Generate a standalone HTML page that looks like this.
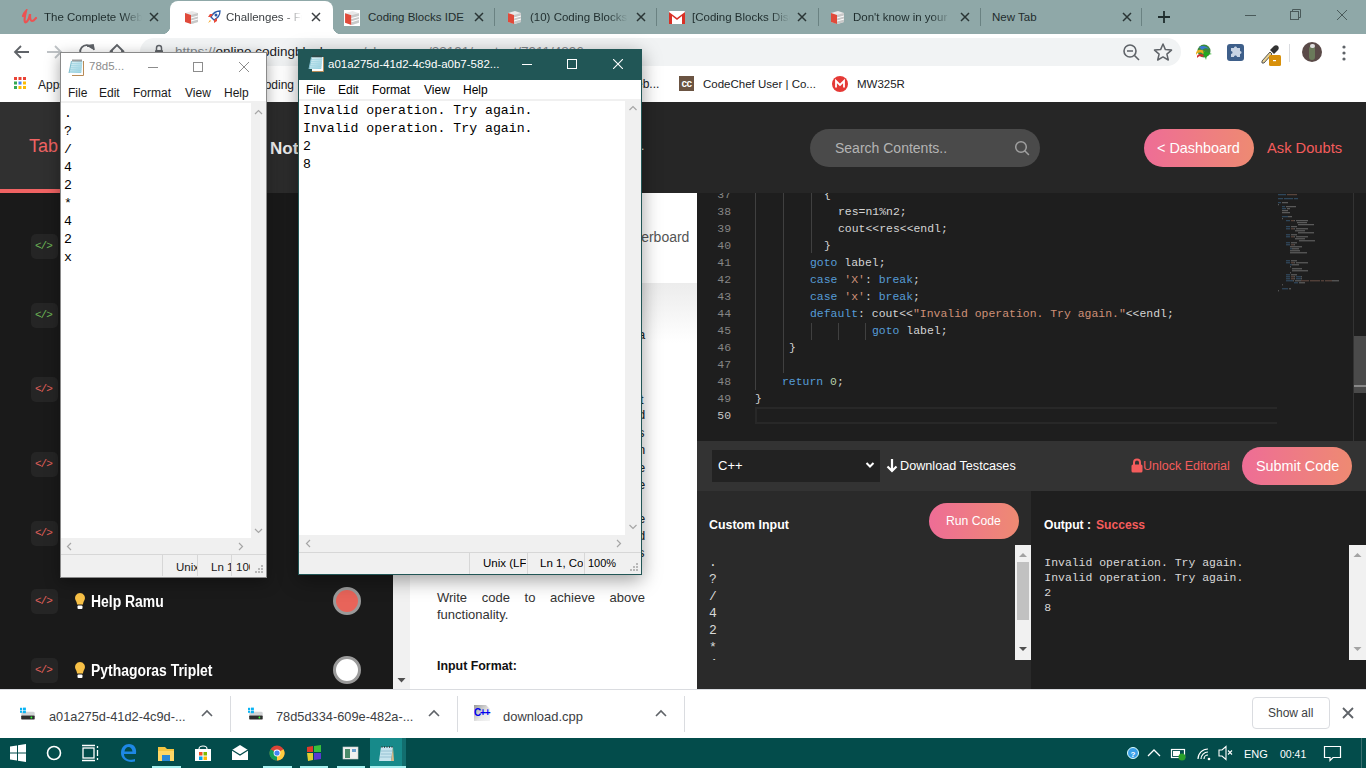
<!DOCTYPE html>
<html><head><meta charset="utf-8">
<style>
*{margin:0;padding:0;box-sizing:border-box}
html,body{width:1366px;height:768px;overflow:hidden;background:#fff;font-family:"Liberation Sans",sans-serif}
.a{position:absolute}
.t{position:absolute;white-space:nowrap;line-height:1}
.mono{font-family:"Liberation Mono",monospace}
</style></head><body>
<!-- ============ CHROME TAB STRIP ============ -->
<div class="a" style="left:0;top:0;width:1366px;height:34px;background:#8fa8a8"></div>
<div class="a" style="left:162px;top:0;width:179px;height:34px;overflow:hidden">
  <div class="a" style="left:8px;top:1px;width:163px;height:40px;background:#fff;border-radius:8px"></div>
  <div class="a" style="left:0;top:26px;width:8px;height:8px;background:radial-gradient(circle at 0 0,#8fa8a8 8px,#fff 8.5px)"></div>
  <div class="a" style="left:171px;top:26px;width:8px;height:8px;background:radial-gradient(circle at 100% 0,#8fa8a8 8px,#fff 8.5px)"></div>
</div>
<!-- tab favicons -->
<svg class="a" style="left:20px;top:9px" width="18" height="16" viewBox="0 0 18 16"><path d="M3 7 C4 4 6 2 6 2 C5 6 4 11 5 13 C6 14 8 12 9 9 C10 6 10 5 10 5 C10 8 10 12 12 12 C14 12 15 10 16 9" fill="none" stroke="#ec5252" stroke-width="2.2" stroke-linecap="round"/></svg>
<svg class="a" style="left:184px;top:10px" width="15" height="15" viewBox="0 0 15 15"><path d="M1 3 L8 1 L14 3 L14 12 L8 14 L1 12Z" fill="#e8e8e8"/><path d="M1 3 L7 5 L7 14 L1 12Z" fill="#e04a3a"/><path d="M7 5 L14 3 L14 12 L7 14Z" fill="#c8c8c8"/><path d="M7 8 L14 6 M7 11 L14 9" stroke="#fff" stroke-width="1"/></svg>
<svg class="a" style="left:206px;top:9px" width="16" height="16" viewBox="0 0 16 16"><path d="M14 2 C10 2 7 4 5 8 L8 11 C12 9 14 6 14 2Z" fill="#fff" stroke="#2a5aa8" stroke-width="1.3"/><circle cx="10" cy="6" r="1.5" fill="#2a5aa8"/><path d="M5 8 L2 8 L4 5 L7 5Z M8 11 L8 14 L11 12 L11 9Z" fill="#e84a3a"/><path d="M4 11 L2 14 L5 12Z" fill="#f5a623"/></svg>
<svg class="a" style="left:344px;top:10px" width="16" height="16" viewBox="0 0 15 15"><rect x="0" y="0" width="15" height="15" fill="#fff"/><path d="M1 3 L8 1 L14 3 L14 12 L8 14 L1 12Z" fill="#e8e8e8"/><path d="M1 3 L7 5 L7 14 L1 12Z" fill="#e04a3a"/><path d="M7 5 L14 3 L14 12 L7 14Z" fill="#c8c8c8"/><path d="M7 8 L14 6 M7 11 L14 9" stroke="#fff" stroke-width="1"/></svg>
<svg class="a" style="left:507px;top:10px" width="15" height="15" viewBox="0 0 15 15"><path d="M1 3 L8 1 L14 3 L14 12 L8 14 L1 12Z" fill="#e8e8e8"/><path d="M1 3 L7 5 L7 14 L1 12Z" fill="#e04a3a"/><path d="M7 5 L14 3 L14 12 L7 14Z" fill="#c8c8c8"/><path d="M7 8 L14 6 M7 11 L14 9" stroke="#fff" stroke-width="1"/></svg>
<svg class="a" style="left:669px;top:11px" width="16" height="13" viewBox="0 0 16 13"><rect x="0" y="0" width="16" height="13" rx="1" fill="#fff"/><path d="M0 1 L8 7 L16 1 L16 13 L13 13 L13 5 L8 9 L3 5 L3 13 L0 13Z" fill="#d93025"/></svg>
<svg class="a" style="left:830px;top:10px" width="15" height="15" viewBox="0 0 15 15"><path d="M1 3 L8 1 L14 3 L14 12 L8 14 L1 12Z" fill="#e8e8e8"/><path d="M1 3 L7 5 L7 14 L1 12Z" fill="#e04a3a"/><path d="M7 5 L14 3 L14 12 L7 14Z" fill="#c8c8c8"/><path d="M7 8 L14 6 M7 11 L14 9" stroke="#fff" stroke-width="1"/></svg>
<!-- tab titles (with fade) -->
<div class="t" style="left:44px;top:11.5px;width:98px;overflow:hidden;font-size:11.5px;color:#1f2d2d;-webkit-mask-image:linear-gradient(90deg,#000 80%,transparent)">The Complete Web Developer</div>
<div class="t" style="left:226px;top:11.5px;width:76px;overflow:hidden;font-size:11.5px;color:#3c4043;-webkit-mask-image:linear-gradient(90deg,#000 75%,transparent)">Challenges - Fundamentals</div>
<div class="t" style="left:368px;top:11.5px;font-size:11.5px;color:#1f2d2d">Coding Blocks IDE</div>
<div class="t" style="left:530px;top:11.5px;width:98px;overflow:hidden;font-size:11.5px;color:#1f2d2d;-webkit-mask-image:linear-gradient(90deg,#000 80%,transparent)">(10) Coding Blocks Discord</div>
<div class="t" style="left:692px;top:11.5px;width:98px;overflow:hidden;font-size:11.5px;color:#1f2d2d;-webkit-mask-image:linear-gradient(90deg,#000 80%,transparent)">[Coding Blocks Discord]</div>
<div class="t" style="left:853px;top:11.5px;width:98px;overflow:hidden;font-size:11.5px;color:#1f2d2d;-webkit-mask-image:linear-gradient(90deg,#000 80%,transparent)">Don't know in your language</div>
<div class="t" style="left:992px;top:11.5px;font-size:11.5px;color:#1f2d2d">New Tab</div>
<!-- tab close X -->
<svg class="a" style="left:0;top:0" width="1366" height="34">
 <g stroke="#2a3535" stroke-width="1.5" fill="none">
  <path d="M150 13 L158 21 M158 13 L150 21"/>
  <path d="M312 13 L320 21 M320 13 L312 21" stroke="#3c4043"/>
  <path d="M475 13 L483 21 M483 13 L475 21"/>
  <path d="M637 13 L645 21 M645 13 L637 21"/>
  <path d="M798 13 L806 21 M806 13 L798 21"/>
  <path d="M961 13 L969 21 M969 13 L961 21"/>
  <path d="M1123 13 L1131 21 M1131 13 L1123 21"/>
 </g>
 <g stroke="#6a8282" stroke-width="1">
  <path d="M494.5 8 V26 M656.5 8 V26 M818.5 8 V26 M980.5 8 V26 M1141.5 8 V26"/>
 </g>
 <path d="M1164 11 V23 M1158 17 H1170" stroke="#1f2d2d" stroke-width="1.8"/>
 <path d="M1245 15.5 H1256" stroke="#4a5a5a" stroke-width="1"/>
 <g fill="none" stroke="#4a5a5a" stroke-width="1"><rect x="1290.5" y="11.5" width="8" height="8"/><path d="M1292.5 11.5 V9.5 H1300.5 V17.5 H1298.5"/></g>
 <path d="M1337 10 L1347 20 M1347 10 L1337 20" stroke="#4a5a5a" stroke-width="1"/>
</svg>
<!-- ============ TOOLBAR ============ -->
<div class="a" style="left:0;top:34px;width:1366px;height:68px;background:#fff"></div>
<div class="a" style="left:140px;top:38px;width:1041px;height:28px;background:#f1f3f4;border-radius:14px"></div>
<svg class="a" style="left:0;top:34px" width="140" height="34">
 <g fill="none" stroke-width="1.8">
  <path d="M29 18 H15 M21 12 L15 18 L21 24" stroke="#5f6368"/>
  <path d="M47 18 H61 M55 12 L61 18 L55 24" stroke="#bfc3c6"/>
  <path d="M92 14 A6.5 6.5 0 1 0 93 19" stroke="#5f6368"/>
  <path d="M87 12 L93 11 L94 16" stroke="#5f6368" fill="#5f6368"/>
  <path d="M110 18 L117 11 L124 18 M112 16 V25 H122 V16" stroke="#5f6368"/>
 </g>
</svg>
<svg class="a" style="left:154px;top:44px" width="10" height="13" viewBox="0 0 10 13"><path d="M2.5 6 V4 A2.5 2.5 0 0 1 7.5 4 V6" fill="none" stroke="#5f6368" stroke-width="1.5"/><rect x="1" y="6" width="8" height="6" rx="1" fill="#5f6368"/></svg>
<div class="t" style="left:175px;top:45px;font-size:13.5px;color:#80868b">https://<span style="color:#202124">online.codingblocks.com</span>/classroom/33191/content/7911/4896</div>
<svg class="a" style="left:1120px;top:40px" width="240" height="26">
 <g fill="none" stroke="#5f6368" stroke-width="1.6"><circle cx="10" cy="11" r="6"/><path d="M14.5 15.5 L19 20 M7 11 H13"/></g>
 <path d="M43 4 L45.4 9.6 L51.5 10.1 L46.9 14.1 L48.3 20 L43 16.9 L37.7 20 L39.1 14.1 L34.5 10.1 L40.6 9.6Z" fill="none" stroke="#5f6368" stroke-width="1.5" stroke-linejoin="round"/>
</svg>
<!-- extension icons -->
<svg class="a" style="left:1194px;top:43px" width="20" height="18" viewBox="0 0 20 18"><circle cx="10" cy="8" r="6.5" fill="#3a8a3a"/><path d="M5 4 C8 2 13 3 15 6 C13 5 10 5 8 7Z" fill="#3a7ad0"/><path d="M2 10 C3 6 8 6 11 9 L9 11 C7 9 4 9 2 12Z" fill="#e8b020"/><path d="M3 13 C5 10 9 11 10 13 L8 14 C6 13 5 13 3 15Z" fill="#d03030"/><path d="M9 8 L18 11 L13 12 L12 17Z" fill="#22aa22"/></svg>
<svg class="a" style="left:1227px;top:44px" width="17" height="17" viewBox="0 0 17 17"><rect x="0" y="0" width="17" height="17" rx="3" fill="#3e5f8a"/><path d="M4 4 H7 C7 2 10 2 10 4 H13 V7 C15 7 15 10 13 10 V13 H10 C10 11 7 11 7 13 H4 V10 C6 10 6 7 4 7Z" fill="#c8d4e4"/></svg>
<svg class="a" style="left:1259px;top:43px" width="24" height="24" viewBox="0 0 24 24"><path d="M3 18 L11 9 L13 11 L5 20 L3 20Z" fill="#e8d090" stroke="#555" stroke-width="1"/><path d="M11 7 L15 3 C16 2 18 2 19 3 C20 4 20 6 19 7 L15 11 Z" fill="#333"/><rect x="10" y="12" width="12" height="11" rx="1.5" fill="#d8900a"/><rect x="14" y="17" width="3" height="1.2" fill="#fff"/></svg>
<div class="a" style="left:1289px;top:44px;width:1px;height:18px;background:#dadce0"></div>
<div class="a" style="left:1302px;top:42px;width:20px;height:20px;border-radius:50%;background:#5a4a48;overflow:hidden"><div class="a" style="left:7px;top:4px;width:6px;height:14px;background:#6a7a5a;border-radius:3px"></div><div class="a" style="left:8px;top:2px;width:5px;height:4px;background:#ddd;border-radius:2px"></div></div>
<svg class="a" style="left:1340px;top:44px" width="8" height="18"><circle cx="4" cy="3" r="1.6" fill="#5f6368"/><circle cx="4" cy="9" r="1.6" fill="#5f6368"/><circle cx="4" cy="15" r="1.6" fill="#5f6368"/></svg>
<!-- ============ BOOKMARKS ============ -->
<svg class="a" style="left:14px;top:77px" width="12" height="12" viewBox="0 0 12 12">
 <rect x="0" y="0" width="3" height="3" fill="#ea4335"/><rect x="4.5" y="0" width="3" height="3" fill="#ea4335"/><rect x="9" y="0" width="3" height="3" fill="#ea4335"/>
 <rect x="0" y="4.5" width="3" height="3" fill="#34a853"/><rect x="4.5" y="4.5" width="3" height="3" fill="#4285f4"/><rect x="9" y="4.5" width="3" height="3" fill="#fbbc05"/>
 <rect x="0" y="9" width="3" height="3" fill="#34a853"/><rect x="4.5" y="9" width="3" height="3" fill="#fbbc05"/><rect x="9" y="9" width="3" height="3" fill="#fbbc05"/>
</svg>
<div class="t" style="left:38px;top:79px;font-size:12px;color:#202124">Apps</div>
<div class="t" style="left:256px;top:79px;font-size:12px;color:#202124">Coding</div>
<div class="t" style="left:636px;top:78px;font-size:12px;color:#202124">eb...</div>
<div class="a" style="left:679px;top:76px;width:15px;height:15px;background:#6b5442;color:#fff;font-size:10px;font-weight:bold;line-height:15px;text-align:center;letter-spacing:-0.5px">cc</div>
<div class="t" style="left:703px;top:79px;font-size:11.5px;color:#202124">CodeChef User | Co...</div>
<svg class="a" style="left:832px;top:76px" width="16" height="16" viewBox="0 0 16 16"><circle cx="8" cy="8" r="8" fill="#e53935"/><path d="M4 11.5 V5 L8 9 L12 5 V11.5" fill="none" stroke="#fff" stroke-width="1.8"/></svg>
<div class="t" style="left:857px;top:79px;font-size:11.5px;color:#202124">MW325R</div>
<!-- ============ WEBSITE ============ -->
<div class="a" style="left:0;top:102px;width:1366px;height:587px;background:#1a1a1a"></div>
<!-- header -->
<div class="a" style="left:0;top:102px;width:1366px;height:91px;background:#262626"></div>
<div class="a" style="left:0;top:102px;width:62px;height:91px;background:#303030"></div>
<div class="a" style="left:262px;top:102px;width:40px;height:91px;background:#2c2c2c"></div>
<div class="a" style="left:0;top:189px;width:62px;height:4px;background:#f06363"></div>
<div class="t" style="left:29px;top:137px;font-size:18px;color:#f06363">Tab</div>
<div class="t" style="left:270px;top:139.5px;font-size:17px;font-weight:bold;color:#eee">Notes</div>
<div class="t" style="left:641px;top:140px;font-size:12px;color:#ddd">.</div>
<div class="a" style="left:810px;top:129px;width:230px;height:38px;border-radius:19px;background:#4a4a4a"></div>
<div class="t" style="left:835px;top:141px;font-size:14px;color:#b4b4b4">Search Contents..</div>
<svg class="a" style="left:1014px;top:140px" width="17" height="17" viewBox="0 0 17 17"><circle cx="7" cy="7" r="5.3" fill="none" stroke="#a0a0a0" stroke-width="1.5"/><path d="M11 11 L14.5 14.5" stroke="#a0a0a0" stroke-width="1.5" stroke-linecap="round"/></svg>
<div class="a" style="left:1144px;top:129px;width:110px;height:38px;border-radius:19px;background:linear-gradient(90deg,#ee6d96,#ee8a72)"></div>
<div class="t" style="left:1157px;top:141px;font-size:14.4px;color:#fff">&lt; Dashboard</div>
<div class="t" style="left:1267px;top:141px;font-size:14.7px;color:#f45c5c">Ask Doubts</div>
<!-- sidebar list -->
<div class="a" style="left:393px;top:193px;width:17px;height:496px;background:#f1f1f1"></div>
<svg class="a" style="left:393px;top:676px" width="17" height="10"><path d="M4.5 2 H12.5 L8.5 6.5Z" fill="#505050"/></svg>
<div class="a" style="left:31px;top:234px;width:27px;height:25px;border-radius:5px;background:#252525"></div>
<div class="t mono" style="left:35px;top:240.5px;font-size:11px;color:#6cb455;letter-spacing:-1px">&lt;/&gt;</div>
<div class="a" style="left:31px;top:303px;width:27px;height:25px;border-radius:5px;background:#252525"></div>
<div class="t mono" style="left:35px;top:309.5px;font-size:11px;color:#6cb455;letter-spacing:-1px">&lt;/&gt;</div>
<div class="a" style="left:31px;top:377px;width:27px;height:25px;border-radius:5px;background:#252525"></div>
<div class="t mono" style="left:35px;top:383.5px;font-size:11px;color:#e0605a;letter-spacing:-1px">&lt;/&gt;</div>
<div class="a" style="left:31px;top:452px;width:27px;height:25px;border-radius:5px;background:#252525"></div>
<div class="t mono" style="left:35px;top:458.5px;font-size:11px;color:#e0605a;letter-spacing:-1px">&lt;/&gt;</div>
<div class="a" style="left:31px;top:521px;width:27px;height:25px;border-radius:5px;background:#252525"></div>
<div class="t mono" style="left:35px;top:527.5px;font-size:11px;color:#e0605a;letter-spacing:-1px">&lt;/&gt;</div>
<div class="a" style="left:31px;top:589px;width:27px;height:25px;border-radius:5px;background:#252525"></div>
<div class="t mono" style="left:35px;top:595.5px;font-size:11px;color:#e0605a;letter-spacing:-1px">&lt;/&gt;</div>
<div class="a" style="left:31px;top:658px;width:27px;height:25px;border-radius:5px;background:#252525"></div>
<div class="t mono" style="left:35px;top:664.5px;font-size:11px;color:#e0605a;letter-spacing:-1px">&lt;/&gt;</div>
<svg class="a" style="left:74px;top:592px" width="12" height="18" viewBox="0 0 12 18"><path d="M6 1 A5 5 0 0 1 10.5 8 C9.5 10 9 11 9 12.5 H3 C3 11 2.5 10 1.5 8 A5 5 0 0 1 6 1Z" fill="#f7c046"/><rect x="3.5" y="13.5" width="5" height="3.5" rx="1" fill="#fff"/></svg>
<div class="t" style="left:91px;top:594px;font-size:16px;font-weight:bold;color:#fff;transform:scaleX(0.87);transform-origin:0 0">Help Ramu</div>
<div class="a" style="left:333px;top:587px;width:28px;height:28px;border-radius:50%;background:#e8645a;border:3px solid #9a9a9a"></div>
<svg class="a" style="left:74px;top:661px" width="12" height="18" viewBox="0 0 12 18"><path d="M6 1 A5 5 0 0 1 10.5 8 C9.5 10 9 11 9 12.5 H3 C3 11 2.5 10 1.5 8 A5 5 0 0 1 6 1Z" fill="#f7c046"/><rect x="3.5" y="13.5" width="5" height="3.5" rx="1" fill="#fff"/></svg>
<div class="t" style="left:91px;top:663px;font-size:16px;font-weight:bold;color:#fff;transform:scaleX(0.87);transform-origin:0 0">Pythagoras Triplet</div>
<div class="a" style="left:333px;top:656px;width:28px;height:28px;border-radius:50%;background:#fff;border:3px solid #9a9a9a"></div>
<!-- problem panel -->
<div class="a" style="left:410px;top:193px;width:287px;height:496px;background:#fff"></div>
<div class="a" style="left:410px;top:283px;width:287px;height:60px;background:linear-gradient(#ececec,#fff)"></div>
<div class="t" style="left:610px;top:230px;font-size:14px;color:#555">Leaderboard</div>
<div class="t" style="left:638px;top:328px;font-size:13px;color:#222">a</div>
<div class="t" style="left:640px;top:393px;font-size:13px;color:#222">t</div>
<div class="t" style="left:638px;top:408px;font-size:13px;color:#222">d</div>
<div class="t" style="left:638px;top:426px;font-size:13px;color:#222">s</div>
<div class="t" style="left:638px;top:443px;font-size:13px;color:#222">n</div>
<div class="t" style="left:638px;top:461px;font-size:13px;color:#222">e</div>
<div class="t" style="left:638px;top:478px;font-size:13px;color:#222">e</div>
<div class="t" style="left:638px;top:511.5px;font-size:13px;color:#222">e</div>
<div class="t" style="left:638px;top:528.5px;font-size:13px;color:#222">d</div>
<div class="t" style="left:638px;top:545.5px;font-size:13px;color:#222">s</div>
<div class="a" style="left:437px;top:589px;width:208px;font-size:13px;line-height:17px;color:#333;text-align:justify;text-align-last:left">Write code to achieve above functionality.</div>
<div class="t" style="left:437px;top:660px;font-size:12.4px;font-weight:bold;color:#111">Input Format:</div>
<!-- code editor -->
<div class="a" style="left:697px;top:193px;width:669px;height:248px;background:#1e1e1e;overflow:hidden">
 <div class="t mono" style="left:14px;top:-6.8px;width:20px;text-align:right;height:17px;line-height:17px;font-size:11.45px;color:#858585">37</div>
<div class="t mono" style="left:127px;top:-6.8px;height:17px;line-height:17px;font-size:11.45px;white-space:pre"><span style="color:#d4d4d4">{</span></div>
<div class="t mono" style="left:14px;top:10.2px;width:20px;text-align:right;height:17px;line-height:17px;font-size:11.45px;color:#858585">38</div>
<div class="t mono" style="left:141px;top:10.2px;height:17px;line-height:17px;font-size:11.45px;white-space:pre"><span style="color:#d4d4d4">res=n1%n2;</span></div>
<div class="t mono" style="left:14px;top:27.2px;width:20px;text-align:right;height:17px;line-height:17px;font-size:11.45px;color:#858585">39</div>
<div class="t mono" style="left:141px;top:27.2px;height:17px;line-height:17px;font-size:11.45px;white-space:pre"><span style="color:#d4d4d4">cout&lt;&lt;res&lt;&lt;endl;</span></div>
<div class="t mono" style="left:14px;top:44.2px;width:20px;text-align:right;height:17px;line-height:17px;font-size:11.45px;color:#858585">40</div>
<div class="t mono" style="left:127px;top:44.2px;height:17px;line-height:17px;font-size:11.45px;white-space:pre"><span style="color:#d4d4d4">}</span></div>
<div class="t mono" style="left:14px;top:61.2px;width:20px;text-align:right;height:17px;line-height:17px;font-size:11.45px;color:#858585">41</div>
<div class="t mono" style="left:113px;top:61.2px;height:17px;line-height:17px;font-size:11.45px;white-space:pre"><span style="color:#569cd6">goto</span><span style="color:#d4d4d4"> label;</span></div>
<div class="t mono" style="left:14px;top:78.2px;width:20px;text-align:right;height:17px;line-height:17px;font-size:11.45px;color:#858585">42</div>
<div class="t mono" style="left:113px;top:78.2px;height:17px;line-height:17px;font-size:11.45px;white-space:pre"><span style="color:#569cd6">case</span><span style="color:#d4d4d4"> </span><span style="color:#ce9178">&#x27;X&#x27;</span><span style="color:#d4d4d4">: </span><span style="color:#569cd6">break</span><span style="color:#d4d4d4">;</span></div>
<div class="t mono" style="left:14px;top:95.2px;width:20px;text-align:right;height:17px;line-height:17px;font-size:11.45px;color:#858585">43</div>
<div class="t mono" style="left:113px;top:95.2px;height:17px;line-height:17px;font-size:11.45px;white-space:pre"><span style="color:#569cd6">case</span><span style="color:#d4d4d4"> </span><span style="color:#ce9178">&#x27;x&#x27;</span><span style="color:#d4d4d4">: </span><span style="color:#569cd6">break</span><span style="color:#d4d4d4">;</span></div>
<div class="t mono" style="left:14px;top:112.2px;width:20px;text-align:right;height:17px;line-height:17px;font-size:11.45px;color:#858585">44</div>
<div class="t mono" style="left:113px;top:112.2px;height:17px;line-height:17px;font-size:11.45px;white-space:pre"><span style="color:#569cd6">default</span><span style="color:#d4d4d4">: cout&lt;&lt;</span><span style="color:#ce9178">&quot;Invalid operation. Try again.&quot;</span><span style="color:#d4d4d4">&lt;&lt;endl;</span></div>
<div class="t mono" style="left:14px;top:129.2px;width:20px;text-align:right;height:17px;line-height:17px;font-size:11.45px;color:#858585">45</div>
<div class="t mono" style="left:175px;top:129.2px;height:17px;line-height:17px;font-size:11.45px;white-space:pre"><span style="color:#569cd6">goto</span><span style="color:#d4d4d4"> label;</span></div>
<div class="t mono" style="left:14px;top:146.2px;width:20px;text-align:right;height:17px;line-height:17px;font-size:11.45px;color:#858585">46</div>
<div class="t mono" style="left:92px;top:146.2px;height:17px;line-height:17px;font-size:11.45px;white-space:pre"><span style="color:#d4d4d4">}</span></div>
<div class="t mono" style="left:14px;top:163.2px;width:20px;text-align:right;height:17px;line-height:17px;font-size:11.45px;color:#858585">47</div>
<div class="t mono" style="left:14px;top:180.2px;width:20px;text-align:right;height:17px;line-height:17px;font-size:11.45px;color:#858585">48</div>
<div class="t mono" style="left:85px;top:180.2px;height:17px;line-height:17px;font-size:11.45px;white-space:pre"><span style="color:#569cd6">return</span><span style="color:#d4d4d4"> </span><span style="color:#b5cea8">0</span><span style="color:#d4d4d4">;</span></div>
<div class="t mono" style="left:14px;top:197.2px;width:20px;text-align:right;height:17px;line-height:17px;font-size:11.45px;color:#858585">49</div>
<div class="t mono" style="left:58px;top:197.2px;height:17px;line-height:17px;font-size:11.45px;white-space:pre"><span style="color:#d4d4d4">}</span></div>
<div class="t mono" style="left:14px;top:214.2px;width:20px;text-align:right;height:17px;line-height:17px;font-size:11.45px;color:#c6c6c6">50</div>
<div class="a" style="left:58.0px;top:0px;width:1px;height:197px;background:#404040"></div>
<div class="a" style="left:85.5px;top:0px;width:1px;height:180px;background:#404040"></div>
<div class="a" style="left:113.5px;top:0px;width:1px;height:60px;background:#404040"></div>
<div class="a" style="left:113.5px;top:130px;width:1px;height:17px;background:#404040"></div>
<div class="a" style="left:141.0px;top:130px;width:1px;height:17px;background:#404040"></div>
<div class="a" style="left:168.0px;top:130px;width:1px;height:17px;background:#404040"></div>
<div class="a" style="left:58px;top:214px;width:522px;height:17px;border:2px solid #282828;border-right:0"></div>
<svg class="a" style="left:581px;top:0" width="75" height="110"><rect x="0.0" y="1.2" width="8.0" height="1" fill="#569cd6" opacity="0.42"/><rect x="9.0" y="1.2" width="10.0" height="1" fill="#ce9178" opacity="0.42"/><rect x="0.0" y="5.2" width="5.0" height="1" fill="#569cd6" opacity="0.42"/><rect x="6.0" y="5.2" width="9.0" height="1" fill="#569cd6" opacity="0.42"/><rect x="16.0" y="5.2" width="4.0" height="1" fill="#569cd6" opacity="0.42"/><rect x="0.0" y="9.2" width="3.0" height="1" fill="#569cd6" opacity="0.42"/><rect x="4.0" y="9.2" width="6.0" height="1" fill="#d4d4d4" opacity="0.42"/><rect x="0.0" y="11.2" width="1.0" height="1" fill="#d4d4d4" opacity="0.42"/><rect x="4.0" y="13.2" width="3.0" height="1" fill="#569cd6" opacity="0.42"/><rect x="8.0" y="13.2" width="10.0" height="1" fill="#d4d4d4" opacity="0.42"/><rect x="4.0" y="15.2" width="4.0" height="1" fill="#569cd6" opacity="0.42"/><rect x="9.0" y="15.2" width="3.0" height="1" fill="#d4d4d4" opacity="0.42"/><rect x="4.0" y="17.2" width="6.0" height="1" fill="#d4d4d4" opacity="0.42"/><rect x="4.0" y="19.2" width="8.0" height="1" fill="#d4d4d4" opacity="0.42"/><rect x="4.0" y="23.2" width="6.0" height="1" fill="#569cd6" opacity="0.42"/><rect x="10.0" y="23.2" width="4.0" height="1" fill="#d4d4d4" opacity="0.42"/><rect x="4.0" y="25.2" width="1.0" height="1" fill="#d4d4d4" opacity="0.42"/><rect x="8.0" y="27.2" width="4.0" height="1" fill="#569cd6" opacity="0.42"/><rect x="13.0" y="27.2" width="3.0" height="1" fill="#ce9178" opacity="0.42"/><rect x="16.0" y="27.2" width="1.0" height="1" fill="#d4d4d4" opacity="0.42"/><rect x="18.0" y="27.2" width="12.0" height="1" fill="#d4d4d4" opacity="0.42"/><rect x="19.0" y="29.2" width="10.0" height="1" fill="#d4d4d4" opacity="0.42"/><rect x="20.0" y="31.2" width="16.0" height="1" fill="#d4d4d4" opacity="0.42"/><rect x="8.0" y="33.2" width="4.0" height="1" fill="#569cd6" opacity="0.42"/><rect x="13.0" y="33.2" width="6.0" height="1" fill="#d4d4d4" opacity="0.42"/><rect x="8.0" y="35.3" width="4.0" height="1" fill="#569cd6" opacity="0.42"/><rect x="13.0" y="35.3" width="3.0" height="1" fill="#ce9178" opacity="0.42"/><rect x="16.0" y="35.3" width="1.0" height="1" fill="#d4d4d4" opacity="0.42"/><rect x="18.0" y="35.3" width="12.0" height="1" fill="#d4d4d4" opacity="0.42"/><rect x="17.0" y="37.3" width="10.0" height="1" fill="#d4d4d4" opacity="0.42"/><rect x="20.0" y="39.3" width="16.0" height="1" fill="#d4d4d4" opacity="0.42"/><rect x="8.0" y="41.3" width="4.0" height="1" fill="#569cd6" opacity="0.42"/><rect x="13.0" y="41.3" width="6.0" height="1" fill="#d4d4d4" opacity="0.42"/><rect x="8.0" y="43.3" width="4.0" height="1" fill="#569cd6" opacity="0.42"/><rect x="13.0" y="43.3" width="3.0" height="1" fill="#ce9178" opacity="0.42"/><rect x="16.0" y="43.3" width="1.0" height="1" fill="#d4d4d4" opacity="0.42"/><rect x="18.0" y="43.3" width="12.0" height="1" fill="#d4d4d4" opacity="0.42"/><rect x="17.0" y="45.3" width="10.0" height="1" fill="#d4d4d4" opacity="0.42"/><rect x="21.0" y="47.3" width="16.0" height="1" fill="#d4d4d4" opacity="0.42"/><rect x="8.0" y="49.3" width="4.0" height="1" fill="#569cd6" opacity="0.42"/><rect x="13.0" y="49.3" width="6.0" height="1" fill="#d4d4d4" opacity="0.42"/><rect x="8.0" y="51.3" width="4.0" height="1" fill="#569cd6" opacity="0.42"/><rect x="13.0" y="51.3" width="3.0" height="1" fill="#ce9178" opacity="0.42"/><rect x="16.0" y="51.3" width="1.0" height="1" fill="#d4d4d4" opacity="0.42"/><rect x="12.0" y="53.3" width="12.0" height="1" fill="#d4d4d4" opacity="0.42"/><rect x="12.0" y="55.3" width="2.0" height="1" fill="#569cd6" opacity="0.42"/><rect x="14.0" y="55.3" width="7.0" height="1" fill="#d4d4d4" opacity="0.42"/><rect x="12.0" y="57.3" width="10.0" height="1" fill="#d4d4d4" opacity="0.42"/><rect x="12.0" y="59.3" width="17.0" height="1" fill="#d4d4d4" opacity="0.42"/><rect x="8.0" y="67.3" width="4.0" height="1" fill="#569cd6" opacity="0.42"/><rect x="13.0" y="67.3" width="6.0" height="1" fill="#d4d4d4" opacity="0.42"/><rect x="8.0" y="69.3" width="4.0" height="1" fill="#569cd6" opacity="0.42"/><rect x="13.0" y="69.3" width="3.0" height="1" fill="#ce9178" opacity="0.42"/><rect x="16.0" y="69.3" width="1.0" height="1" fill="#d4d4d4" opacity="0.42"/><rect x="18.0" y="69.3" width="12.0" height="1" fill="#d4d4d4" opacity="0.42"/><rect x="12.0" y="71.3" width="2.0" height="1" fill="#569cd6" opacity="0.42"/><rect x="14.0" y="71.3" width="7.0" height="1" fill="#d4d4d4" opacity="0.42"/><rect x="12.0" y="73.3" width="1.0" height="1" fill="#d4d4d4" opacity="0.42"/><rect x="14.0" y="75.3" width="10.0" height="1" fill="#d4d4d4" opacity="0.42"/><rect x="14.0" y="77.3" width="16.0" height="1" fill="#d4d4d4" opacity="0.42"/><rect x="12.0" y="79.3" width="1.0" height="1" fill="#d4d4d4" opacity="0.42"/><rect x="8.0" y="81.3" width="4.0" height="1" fill="#569cd6" opacity="0.42"/><rect x="13.0" y="81.3" width="6.0" height="1" fill="#d4d4d4" opacity="0.42"/><rect x="8.0" y="83.3" width="4.0" height="1" fill="#569cd6" opacity="0.42"/><rect x="13.0" y="83.3" width="3.0" height="1" fill="#ce9178" opacity="0.42"/><rect x="16.0" y="83.3" width="1.0" height="1" fill="#d4d4d4" opacity="0.42"/><rect x="18.0" y="83.3" width="5.0" height="1" fill="#569cd6" opacity="0.42"/><rect x="23.0" y="83.3" width="1.0" height="1" fill="#d4d4d4" opacity="0.42"/><rect x="8.0" y="85.3" width="4.0" height="1" fill="#569cd6" opacity="0.42"/><rect x="13.0" y="85.3" width="3.0" height="1" fill="#ce9178" opacity="0.42"/><rect x="16.0" y="85.3" width="1.0" height="1" fill="#d4d4d4" opacity="0.42"/><rect x="18.0" y="85.3" width="5.0" height="1" fill="#569cd6" opacity="0.42"/><rect x="23.0" y="85.3" width="1.0" height="1" fill="#d4d4d4" opacity="0.42"/><rect x="8.0" y="87.3" width="7.0" height="1" fill="#569cd6" opacity="0.42"/><rect x="15.0" y="87.3" width="1.0" height="1" fill="#d4d4d4" opacity="0.42"/><rect x="17.0" y="87.3" width="6.0" height="1" fill="#d4d4d4" opacity="0.42"/><rect x="23.0" y="87.3" width="8.0" height="1" fill="#ce9178" opacity="0.42"/><rect x="32.0" y="87.3" width="10.0" height="1" fill="#ce9178" opacity="0.42"/><rect x="43.0" y="87.3" width="3.0" height="1" fill="#ce9178" opacity="0.42"/><rect x="47.0" y="87.3" width="7.0" height="1" fill="#ce9178" opacity="0.42"/><rect x="54.0" y="87.3" width="7.0" height="1" fill="#d4d4d4" opacity="0.42"/><rect x="16.0" y="89.3" width="4.0" height="1" fill="#569cd6" opacity="0.42"/><rect x="21.0" y="89.3" width="6.0" height="1" fill="#d4d4d4" opacity="0.42"/><rect x="4.0" y="91.3" width="1.0" height="1" fill="#d4d4d4" opacity="0.42"/><rect x="4.0" y="95.3" width="6.0" height="1" fill="#569cd6" opacity="0.42"/><rect x="11.0" y="95.3" width="2.0" height="1" fill="#d4d4d4" opacity="0.42"/><rect x="0.0" y="97.3" width="1.0" height="1" fill="#d4d4d4" opacity="0.42"/></svg>
<div class="a" style="left:656px;top:0;width:1px;height:248px;background:#333"></div>
<div class="a" style="left:657px;top:143px;width:12px;height:57px;background:#4a4a4a"></div>
<div class="a" style="left:657px;top:192px;width:12px;height:2px;background:#888"></div>
</div>
<!-- controls bar -->
<div class="a" style="left:697px;top:441px;width:669px;height:50px;background:#333"></div>
<div class="a" style="left:712px;top:450px;width:168px;height:32px;background:#222"></div>
<div class="t" style="left:718px;top:459px;font-size:13px;color:#fff">C++</div>
<svg class="a" style="left:865px;top:460px" width="10" height="10"><path d="M1.5 3 L5 6.5 L8.5 3" fill="none" stroke="#fff" stroke-width="2"/></svg>
<svg class="a" style="left:886px;top:458px" width="12" height="15" viewBox="0 0 12 15"><path d="M6 1 V13 M1.5 8.5 L6 13 L10.5 8.5" fill="none" stroke="#fff" stroke-width="2.2"/></svg>
<div class="t" style="left:900px;top:460px;font-size:12.65px;color:#fff">Download Testcases</div>
<svg class="a" style="left:1131px;top:458px" width="12" height="15" viewBox="0 0 12 15"><path d="M3 7 V4.5 A3 3 0 0 1 9 4.5 V7" fill="none" stroke="#f45c5c" stroke-width="2"/><rect x="0.5" y="6.5" width="11" height="8" rx="1.5" fill="#f45c5c"/></svg>
<div class="t" style="left:1143px;top:460px;font-size:12.5px;color:#f45c5c">Unlock Editorial</div>
<div class="a" style="left:1242px;top:447px;width:110px;height:38px;border-radius:19px;background:linear-gradient(90deg,#ee6d96,#ee8a72)"></div>
<div class="t" style="left:1256px;top:459px;font-size:14.4px;color:#fff">Submit Code</div>
<!-- custom input -->
<div class="a" style="left:697px;top:491px;width:334px;height:198px;background:#2a2a2a"></div>
<div class="t" style="left:709px;top:519px;font-size:12.4px;font-weight:bold;color:#fff">Custom Input</div>
<div class="a" style="left:929px;top:503px;width:90px;height:36px;border-radius:18px;background:linear-gradient(90deg,#ee6d96,#ee8a72)"></div>
<div class="t" style="left:946px;top:514.5px;font-size:12.2px;color:#fff">Run Code</div>
<div class="a" style="left:697px;top:545px;width:318px;height:115px;overflow:hidden"><div class="a mono" style="left:12px;top:9px;font-size:13px;line-height:17px;color:#d8d8d8;white-space:pre">.
?
/
4
2
*
4</div></div>
<div class="a" style="left:697px;top:545px;width:334px;height:0;"></div>
<div class="a" style="left:1015px;top:545px;width:16px;height:115px;background:#f1f1f1"></div>
<div class="a" style="left:1017px;top:562px;width:12px;height:58px;background:#c1c1c1"></div>
<svg class="a" style="left:1015px;top:548px" width="16" height="110"><path d="M4 9 H12 L8 5Z" fill="#a3a3a3"/><path d="M4 99 H12 L8 103Z" fill="#505050"/></svg>
<!-- output -->
<div class="a" style="left:1031px;top:491px;width:335px;height:198px;background:#1f1f1f"></div>
<div class="t" style="left:1044px;top:519px;font-size:12.1px;font-weight:bold;color:#fff">Output :<span style="color:#f45c5c;margin-left:5px">Success</span></div>
<div class="a mono" style="left:1044.3px;top:555px;font-size:11.45px;line-height:15px;color:#d8d8d8;white-space:pre">Invalid operation. Try again.
Invalid operation. Try again.
2
8</div>
<div class="a" style="left:1349px;top:545px;width:17px;height:115px;background:#f1f1f1"></div>
<svg class="a" style="left:1349px;top:548px" width="17" height="110"><path d="M4.5 9 H12.5 L8.5 5Z" fill="#a3a3a3"/><path d="M4.5 99 H12.5 L8.5 103Z" fill="#a3a3a3"/></svg>
<!-- ============ DOWNLOAD SHELF ============ -->
<div class="a" style="left:0;top:689px;width:1366px;height:49px;background:#fff;border-top:1px solid #dadce0"></div>
<svg class="a" style="left:18px;top:706px" width="18" height="15" viewBox="0 0 18 15"><path d="M3.5 6.5 L4.5 5.8 H15.5 L16.7 6.5 V9.6 H3.2Z" fill="#d2d4d6"/><rect x="3.2" y="9.6" width="13.5" height="3.8" rx="0.6" fill="#2e2e2e"/><circle cx="13.4" cy="11.5" r="0.9" fill="#3f3"/><rect x="2" y="1.8" width="2.2" height="2.2" fill="#0ab4f4"/><rect x="5" y="1.6" width="2.9" height="2.5" fill="#0ab4f4"/><rect x="2" y="4.6" width="2.2" height="2.2" fill="#0ab4f4"/><rect x="5" y="4.6" width="2.9" height="2.6" fill="#0ab4f4"/></svg>
<div class="t" style="left:49px;top:710.5px;font-size:12.8px;color:#3c4043">a01a275d-41d2-4c9d-...</div>
<svg class="a" style="left:200px;top:708px" width="14" height="10"><path d="M2 8 L7 3 L12 8" fill="none" stroke="#5f6368" stroke-width="1.6"/></svg>
<div class="a" style="left:230px;top:696px;width:1px;height:36px;background:#dadce0"></div>
<svg class="a" style="left:246px;top:706px" width="18" height="15" viewBox="0 0 18 15"><path d="M3.5 6.5 L4.5 5.8 H15.5 L16.7 6.5 V9.6 H3.2Z" fill="#d2d4d6"/><rect x="3.2" y="9.6" width="13.5" height="3.8" rx="0.6" fill="#2e2e2e"/><circle cx="13.4" cy="11.5" r="0.9" fill="#3f3"/><rect x="2" y="1.8" width="2.2" height="2.2" fill="#0ab4f4"/><rect x="5" y="1.6" width="2.9" height="2.5" fill="#0ab4f4"/><rect x="2" y="4.6" width="2.2" height="2.2" fill="#0ab4f4"/><rect x="5" y="4.6" width="2.9" height="2.6" fill="#0ab4f4"/></svg>
<div class="t" style="left:276px;top:710.5px;font-size:12.8px;color:#3c4043">78d5d334-609e-482a-...</div>
<svg class="a" style="left:427px;top:708px" width="14" height="10"><path d="M2 8 L7 3 L12 8" fill="none" stroke="#5f6368" stroke-width="1.6"/></svg>
<div class="a" style="left:457px;top:696px;width:1px;height:36px;background:#dadce0"></div>
<div class="a" style="left:474px;top:705px;width:16px;height:16px;background:linear-gradient(135deg,#9a9a9a,#e8e8e8 60%,#f4f4f4);clip-path:polygon(0 0,75% 0,100% 25%,100% 100%,0 100%)"></div>
<div class="t" style="left:474px;top:708px;font-size:10px;font-weight:bold;color:#0000f0;letter-spacing:-1.2px">C++</div>
<div class="t" style="left:503px;top:710.5px;font-size:12.95px;color:#3c4043">download.cpp</div>
<svg class="a" style="left:654px;top:708px" width="14" height="10"><path d="M2 8 L7 3 L12 8" fill="none" stroke="#5f6368" stroke-width="1.6"/></svg>
<div class="a" style="left:684px;top:696px;width:1px;height:36px;background:#dadce0"></div>
<div class="a" style="left:1252px;top:697px;width:78px;height:32px;border:1px solid #dadce0;border-radius:4px"></div>
<div class="t" style="left:1268px;top:707px;font-size:12px;color:#3c4043">Show all</div>
<svg class="a" style="left:1341px;top:706px" width="14" height="14"><path d="M2 2 L12 12 M12 2 L2 12" stroke="#5f6368" stroke-width="1.8"/></svg>
<!-- ============ TASKBAR ============ -->
<div class="a" style="left:0;top:738px;width:1366px;height:30px;background:#034c4b"></div>
<div class="a" style="left:370px;top:738px;width:32px;height:30px;background:#178a8a"></div>
<div class="a" style="left:402px;top:738px;width:4px;height:30px;background:#126e6e"></div>
<g></g>
<div class="a" style="left:152px;top:766px;width:29px;height:2px;background:#a6f0f0"></div>
<div class="a" style="left:263px;top:766px;width:29px;height:2px;background:#a6f0f0"></div>
<div class="a" style="left:300px;top:766px;width:28px;height:2px;background:#a6f0f0"></div>
<div class="a" style="left:337px;top:766px;width:28px;height:2px;background:#a6f0f0"></div>
<div class="a" style="left:370px;top:766px;width:36px;height:2px;background:#a6f0f0"></div>
<svg class="a" style="left:0;top:738px" width="420" height="30">
 <g fill="#fff"><path d="M10 8.5 L17 7.5 V14.5 H10Z M18 7.3 L26 6 V14.5 H18Z M10 15.5 H17 V22.5 L10 21.5Z M18 15.5 H26 V24 L18 22.7Z"/></g>
 <circle cx="54" cy="15" r="6.5" fill="none" stroke="#fff" stroke-width="1.6"/>
 <g fill="none" stroke="#fff" stroke-width="1.3"><rect x="83" y="10" width="11" height="10"/><path d="M82 7.5 H95 M82 22.5 H95 M97.5 8 V10 M97.5 12 V18 M97.5 20 V22"/></g>
 <path d="M136 16 H124 C124 21 130 23 135 21 V23.5 C128 25 121 22 121 15 C121 9 125 6 129 6 C134 6 137 10 136 16Z M124.5 13.5 H132.5 C132 10.5 130.5 9 128.5 9 C126.5 9 125 10.5 124.5 13.5Z" fill="#1e88e5"/>
 <path d="M158 9 H165 L167 11 H174 V23 H158Z" fill="#f5c542"/><path d="M158 13 H174 V23 H158Z" fill="#ffd766"/><rect x="162" y="17" width="8" height="6" fill="#2a88d8"/>
 <path d="M195 11 H211 V23 H195Z" fill="#fff"/><path d="M199 11 C199 7 207 7 207 11" fill="none" stroke="#fff" stroke-width="1.2"/><rect x="199" y="14" width="3.5" height="3.5" fill="#f25022"/><rect x="203.5" y="14" width="3.5" height="3.5" fill="#7fba00"/><rect x="199" y="18.5" width="3.5" height="3.5" fill="#00a4ef"/><rect x="203.5" y="18.5" width="3.5" height="3.5" fill="#ffb900"/>
 <path d="M232 12 L240 7 L248 12 V22 H232Z" fill="#fff"/><path d="M232 12 L240 17 L248 12" fill="none" stroke="#034c4b" stroke-width="1.3"/>
 <circle cx="277" cy="15" r="7.5" fill="#db4437"/><path d="M277 15 L283.5 11.2 A7.5 7.5 0 0 1 277 22.5Z" fill="#ffcd40"/><path d="M277 15 L277 22.5 A7.5 7.5 0 0 1 270.5 11.2Z" fill="#0f9d58"/><circle cx="277" cy="15" r="3.4" fill="#fff"/><circle cx="277" cy="15" r="2.6" fill="#4285f4"/>
 <path d="M307 9 L313 8 V14 H307Z" fill="#e03a2a"/><path d="M314 8 L321 7 V14 H314Z" fill="#3ac03a"/><path d="M307 15 H313 V22 L308 23Z" fill="#e0d030"/><path d="M314 15 H321 V21 L314 22Z" fill="#5a3ad0"/>
 <rect x="343" y="9" width="15" height="12" fill="#f0f0f0" stroke="#ccc" stroke-width="0.6"/><rect x="345" y="11" width="5" height="9" fill="#4a8a6a"/><rect x="352" y="11" width="4" height="3" fill="#6aa0d0"/>
 <path d="M381 9 H393 L391 23 H379Z" fill="#c6e4ee"/><path d="M391 23 L393 9 L394 23Z" fill="#d8b888"/><path d="M381 13 H392.5 M380.5 16 H392 M380 19 H391.5" stroke="#8ab8cc" stroke-width="0.8"/><path d="M382 8 V10 M384.5 8 V10 M387 8 V10 M389.5 8 V10 M392 8 V10" stroke="#333" stroke-width="0.8"/>
</svg>
<svg class="a" style="left:1120px;top:738px" width="246" height="30">
 <circle cx="13" cy="15" r="5.5" fill="#3aa0e8" stroke="#dff" stroke-width="1"/><text x="13" y="18.5" font-size="8" font-weight="bold" fill="#fff" text-anchor="middle" font-family="Liberation Sans">?</text>
 <path d="M28 18 L34 12 L40 18" fill="none" stroke="#fff" stroke-width="1.3"/>
 <rect x="51.5" y="11.5" width="13" height="8" fill="none" stroke="#fff" stroke-width="1.2"/><rect x="53" y="13" width="7" height="5" fill="#fff"/><circle cx="62" cy="19" r="3.5" fill="#2aa02a"/>
 <g fill="none" stroke="#fff" stroke-width="1.2"><path d="M78 21 A10 10 0 0 1 88 11"/><path d="M81 21 A7 7 0 0 1 88 14"/><path d="M84 21 A4 4 0 0 1 88 17"/></g><circle cx="89" cy="21" r="1.3" fill="#fff"/>
 <path d="M99 12 H102 L106 8.5 V21.5 L102 18 H99Z" fill="none" stroke="#fff" stroke-width="1.1"/><path d="M108 12.5 L112 16.5 M112 12.5 L108 16.5" stroke="#fff" stroke-width="1.1"/>
 <text x="124" y="19.5" font-size="11" fill="#fff" font-family="Liberation Sans">ENG</text>
 <text x="160" y="19.5" font-size="10.5" fill="#fff" font-family="Liberation Sans">00:41</text>
 <path d="M204.5 8.5 H220.5 V19.5 H213 L210 22.5 L210 19.5 H204.5Z" fill="none" stroke="#fff" stroke-width="1.2"/>
 <rect x="241" y="0" width="1" height="30" fill="#3a7070"/>
</svg>
<!-- ============ NOTEPAD 1 (inactive) ============ -->
<div class="a" style="left:60px;top:52px;width:207px;height:526px;background:#fff;border:1px solid #8a8a8a;box-shadow:0 4px 14px rgba(0,0,0,0.35);overflow:hidden">
 <svg class="a" style="left:7px;top:6px" width="17" height="17" viewBox="0 0 17 17"><defs><linearGradient id="npg" x1="0" y1="0" x2="1" y2="1"><stop offset="0" stop-color="#e4f4f8"/><stop offset="1" stop-color="#8ccbdc"/></linearGradient></defs><path d="M4 2 H15.5 V16.5 H4Z" fill="#fdfdfd"/><path d="M15.5 2 V16.5 H4" fill="none" stroke="#b88a55" stroke-width="1"/><path d="M3.5 2 H14.5 L13.2 14 H1Z" fill="url(#npg)"/><path d="M3 4.5 H14 M2.7 6.5 H13.8 M2.4 8.5 H13.6 M2.1 10.5 H13.4 M1.8 12.5 H13.2" stroke="#a8d8e4" stroke-width="0.9"/><path d="M1 14 L3.5 2" stroke="#7fbccc" stroke-width="1"/><path d="M5 0.5 V2.5 M7 0.5 V2.5 M9 0.5 V2.5 M11 0.5 V2.5 M13 0.5 V2.5" stroke="#3a3a3a" stroke-width="1"/></svg>
 <div class="t" style="left:28px;top:8px;font-size:11.5px;color:#8c8c8c">78d5...</div>
 <div class="a" style="left:87px;top:14px;width:10px;height:1px;background:#8c8c8c"></div>
 <div class="a" style="left:132px;top:9px;width:10px;height:10px;border:1px solid #8c8c8c"></div>
 <svg class="a" style="left:178px;top:9px" width="10" height="10"><path d="M0 0 L10 10 M10 0 L0 10" stroke="#8c8c8c" stroke-width="1"/></svg>
 <div class="t" style="left:7px;top:34px;font-size:12px;color:#1a1a1a">File</div>
 <div class="t" style="left:38px;top:34px;font-size:12px;color:#1a1a1a">Edit</div>
 <div class="t" style="left:72px;top:34px;font-size:12px;color:#1a1a1a">Format</div>
 <div class="t" style="left:124px;top:34px;font-size:12px;color:#1a1a1a">View</div>
 <div class="t" style="left:163px;top:34px;font-size:12px;color:#1a1a1a">Help</div>
 <div class="a" style="left:0;top:48px;width:205px;height:2px;background:#f0f0f0"></div>
 <div class="a mono" style="left:3px;top:52px;font-size:13.2px;line-height:18px;color:#000;white-space:pre">.
?
/
4
2
*
4
2
x</div>
 <div class="a" style="left:190px;top:50px;width:15px;height:436px;background:#f0f0f0"></div>
 <svg class="a" style="left:190px;top:52px" width="15" height="434"><path d="M4 9 L7.5 5.5 L11 9" fill="none" stroke="#a6a6a6" stroke-width="1.2"/><path d="M4 424 L7.5 427.5 L11 424" fill="none" stroke="#a6a6a6" stroke-width="1.2"/></svg>
 <div class="a" style="left:0;top:485px;width:205px;height:17px;background:#f0f0f0"></div>
 <svg class="a" style="left:0;top:485px" width="205" height="17"><path d="M10 5 L6.5 8.5 L10 12" fill="none" stroke="#a6a6a6" stroke-width="1.2"/><path d="M178 5 L181.5 8.5 L178 12" fill="none" stroke="#a6a6a6" stroke-width="1.2"/></svg>
 <div class="a" style="left:0;top:501px;width:205px;height:23px;background:#f0f0f0;border-top:1px solid #d7d7d7"></div>
 <div class="a" style="left:101px;top:502px;width:1px;height:21px;background:#d7d7d7"></div>
 <div class="a" style="left:136px;top:502px;width:1px;height:21px;background:#d7d7d7"></div>
 <div class="a" style="left:170px;top:502px;width:1px;height:21px;background:#d7d7d7"></div>
 <div class="t" style="left:115px;top:509px;width:21px;overflow:hidden;font-size:11.5px;color:#1a1a1a">Unix (LF)</div>
 <div class="t" style="left:150px;top:509px;width:20px;overflow:hidden;font-size:11.5px;color:#1a1a1a">Ln 1, Col 1</div>
 <div class="t" style="left:175px;top:509px;width:14px;overflow:hidden;font-size:11.5px;color:#1a1a1a">100%</div>
 <svg class="a" style="left:192px;top:510px" width="12" height="12"><g fill="#b8b8b8"><rect x="8" y="2" width="2" height="2"/><rect x="5" y="5" width="2" height="2"/><rect x="8" y="5" width="2" height="2"/><rect x="2" y="8" width="2" height="2"/><rect x="5" y="8" width="2" height="2"/><rect x="8" y="8" width="2" height="2"/></g></svg>
</div>
<!-- ============ NOTEPAD 2 (active) ============ -->
<div class="a" style="left:298px;top:49px;width:344px;height:526px;background:#fff;border:1px solid #215656;box-shadow:0 5px 18px rgba(0,0,0,0.38);overflow:hidden">
 <div class="a" style="left:0;top:0;width:342px;height:30px;background:#215656"></div>
 <svg class="a" style="left:9px;top:5px" width="17" height="17" viewBox="0 0 17 17"><defs><linearGradient id="npg" x1="0" y1="0" x2="1" y2="1"><stop offset="0" stop-color="#e4f4f8"/><stop offset="1" stop-color="#8ccbdc"/></linearGradient></defs><path d="M4 2 H15.5 V16.5 H4Z" fill="#fdfdfd"/><path d="M15.5 2 V16.5 H4" fill="none" stroke="#b88a55" stroke-width="1"/><path d="M3.5 2 H14.5 L13.2 14 H1Z" fill="url(#npg)"/><path d="M3 4.5 H14 M2.7 6.5 H13.8 M2.4 8.5 H13.6 M2.1 10.5 H13.4 M1.8 12.5 H13.2" stroke="#a8d8e4" stroke-width="0.9"/><path d="M1 14 L3.5 2" stroke="#7fbccc" stroke-width="1"/><path d="M5 0.5 V2.5 M7 0.5 V2.5 M9 0.5 V2.5 M11 0.5 V2.5 M13 0.5 V2.5" stroke="#3a3a3a" stroke-width="1"/></svg>
 <div class="t" style="left:29px;top:9px;font-size:11.5px;color:#fff">a01a275d-41d2-4c9d-a0b7-582...</div>
 <div class="a" style="left:223px;top:14px;width:10px;height:1px;background:#fff"></div>
 <div class="a" style="left:268px;top:9px;width:10px;height:10px;border:1px solid #fff"></div>
 <svg class="a" style="left:314px;top:9px" width="10" height="10"><path d="M0 0 L10 10 M10 0 L0 10" stroke="#fff" stroke-width="1.1"/></svg>
 <div class="t" style="left:7px;top:34px;font-size:12px;color:#000">File</div>
 <div class="t" style="left:39px;top:34px;font-size:12px;color:#000">Edit</div>
 <div class="t" style="left:73px;top:34px;font-size:12px;color:#000">Format</div>
 <div class="t" style="left:125px;top:34px;font-size:12px;color:#000">View</div>
 <div class="t" style="left:164px;top:34px;font-size:12px;color:#000">Help</div>
 <div class="a" style="left:0;top:49px;width:342px;height:2px;background:#f0f0f0"></div>
 <div class="a mono" style="left:4px;top:51.5px;font-size:13.2px;line-height:18px;color:#000;white-space:pre">Invalid operation. Try again.
Invalid operation. Try again.
2
8</div>
 <div class="a" style="left:326px;top:51px;width:16px;height:435px;background:#f0f0f0"></div>
 <svg class="a" style="left:326px;top:51px" width="16" height="435"><path d="M4.5 9 L8 5.5 L11.5 9" fill="none" stroke="#a6a6a6" stroke-width="1.2"/><path d="M4.5 424 L8 427.5 L11.5 424" fill="none" stroke="#a6a6a6" stroke-width="1.2"/></svg>
 <div class="a" style="left:0;top:485px;width:342px;height:17px;background:#f0f0f0"></div>
 <svg class="a" style="left:0;top:485px" width="342" height="17"><path d="M11 5 L7.5 8.5 L11 12" fill="none" stroke="#a6a6a6" stroke-width="1.2"/><path d="M318 5 L321.5 8.5 L318 12" fill="none" stroke="#a6a6a6" stroke-width="1.2"/></svg>
 <div class="a" style="left:0;top:502px;width:342px;height:22px;background:#f0f0f0;border-top:1px solid #d7d7d7"></div>
 <div class="a" style="left:170px;top:503px;width:1px;height:21px;background:#d7d7d7"></div>
 <div class="a" style="left:228px;top:503px;width:1px;height:21px;background:#d7d7d7"></div>
 <div class="a" style="left:285px;top:503px;width:1px;height:21px;background:#d7d7d7"></div>
 <div class="t" style="left:184px;top:508px;width:43px;overflow:hidden;font-size:11.5px;color:#000">Unix (LF)</div>
 <div class="t" style="left:241px;top:508px;width:43px;overflow:hidden;font-size:11.5px;color:#000">Ln 1, Col 1</div>
 <div class="t" style="left:289px;top:508px;font-size:11px;color:#000">100%</div>
 <svg class="a" style="left:329px;top:511px" width="12" height="12"><g fill="#b8b8b8"><rect x="8" y="2" width="2" height="2"/><rect x="5" y="5" width="2" height="2"/><rect x="8" y="5" width="2" height="2"/><rect x="2" y="8" width="2" height="2"/><rect x="5" y="8" width="2" height="2"/><rect x="8" y="8" width="2" height="2"/></g></svg>
</div>
</body></html>
